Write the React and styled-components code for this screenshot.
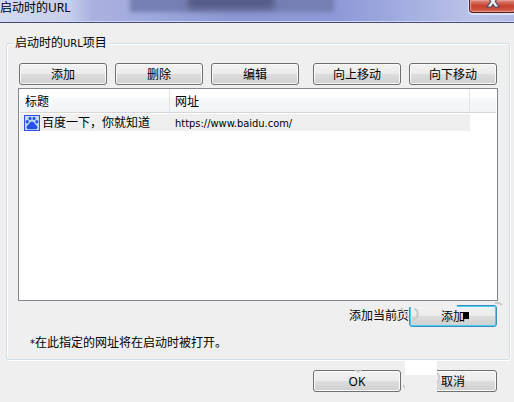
import React from "react";
import styled, { createGlobalStyle } from "styled-components";

const sites = [{ title: "百度一下，你就知道", url: "https://www.baidu.com/" }];

const App = () => {
  return (
    <React.Fragment>
      <GlobalStyle />
      <Dialog>
        <TitleBar>
          <Title>启动时的URL</Title>
          <CloseButton type="button" aria-label="关闭">
            <CloseIcon />
          </CloseButton>
        </TitleBar>

        <Group>
          <Legend>
            启动时的<Latin>URL</Latin>项目
          </Legend>
          <Toolbar>
            <ButtonSet>
              <Button type="button">添加</Button>
              <Button type="button">删除</Button>
              <Button type="button">编辑</Button>
            </ButtonSet>
            <ButtonSet>
              <Button type="button">向上移动</Button>
              <Button type="button">向下移动</Button>
            </ButtonSet>
          </Toolbar>

          <ListBox>
            <Table>
              <colgroup>
                <Col $width="150px" />
                <Col />
                <Col $width="26px" />
              </colgroup>
              <thead>
                <tr>
                  <Head>标题</Head>
                  <Head>网址</Head>
                  <Head as="td" />
                </tr>
              </thead>
              <tbody>
                {sites.map((site) => (
                  <tr key={site.url}>
                    <Cell>
                      <SiteTitle>
                        <PawIcon />
                        {site.title}
                      </SiteTitle>
                    </Cell>
                    <Cell $indent>
                      <Latin>{site.url}</Latin>
                    </Cell>
                  </tr>
                ))}
              </tbody>
            </Table>
          </ListBox>

          <CurrentPage>
            <label htmlFor="add-current">添加当前页</label>
            <ButtonHolder>
              <Button type="button" id="add-current" $focused>
                添加
              </Button>
              <FocusGap />
              <Block />
              <Smudge />
            </ButtonHolder>
          </CurrentPage>
          <Note>
            <Latin>*</Latin>在此指定的网址将在启动时被打开。
          </Note>
        </Group>

        <Footer>
          <ButtonHolder>
            <Button type="button">OK</Button>
            <OkMarks />
          </ButtonHolder>
          <ButtonHolder>
            <Button type="button">取消</Button>
            <Patch />
            <CancelMarks />
          </ButtonHolder>
        </Footer>
      </Dialog>
    </React.Fragment>
  );
};

const CloseIcon = () => (
  <svg width="14" height="14" viewBox="0 0 14 14" aria-hidden="true">
    <path
      d="M1.500 1.500h3.800L7 4l1.700-2.500h3.800L9.300 6.500l3.700 5.500H8.800L7 9.300 5.200 12H1l3.700-5.500z"
      fill="#f4f4f6"
      stroke="#4d4f66"
      strokeWidth="1.2"
    />
  </svg>
);

const PawIcon = () => (
  <svg width="16" height="16" viewBox="0 0 16 16" aria-hidden="true">
    <rect width="16" height="16" fill="#2e50e2" />
    <rect x="1" y="1" width="14" height="14" fill="#c3dcfa" />
    <g fill="#2750e6">
      <ellipse cx="3.200" cy="6.800" rx="1.600" ry="1.800" />
      <ellipse cx="6" cy="3.500" rx="1.500" ry="1.800" />
      <ellipse cx="10" cy="3.500" rx="1.500" ry="1.800" />
      <ellipse cx="12.800" cy="6.800" rx="1.600" ry="1.800" />
      <path d="M8 6.600c1.700 0 2.300 1.700 3.500 2.800 1.500 1.200 2.200 2.200 1.900 3.500-.4 1.500-2.600 1.400-5.400 1.300-2.800.1-5 .2-5.400-1.300-.3-1.300.4-2.300 1.900-3.500C5.700 8.300 6.300 6.600 8 6.600z" />
    </g>
  </svg>
);

const Smudge = () => (
  <Overlay width="112" height="32" viewBox="0 0 112 32" aria-hidden="true">
    <g fill="none" stroke="#c9c9c9" strokeWidth="2">
      <path d="M1 15l2 5M6 8l8 10" />
      <path d="M19 9c5 0 5 10-1 10" />
      <path d="M100 3h4l3 2" />
    </g>
  </Overlay>
);

const OkMarks = () => (
  <Overlay width="112" height="32" viewBox="0 0 112 32" aria-hidden="true">
    <path
      d="M56 5c3 2 4 2 6 0M104 20l4 5"
      fill="none"
      stroke="#cdcdcd"
      strokeWidth="2"
    />
  </Overlay>
);

const CancelMarks = () => (
  <Overlay width="112" height="32" viewBox="0 0 112 32" aria-hidden="true">
    <path
      d="M42 8c3 2 3 7 0 10"
      fill="none"
      stroke="#cdcdcd"
      strokeWidth="2"
    />
  </Overlay>
);

const GlobalStyle = createGlobalStyle`
  * {
    box-sizing: border-box;
  }

  body {
    margin: 0;
    background: #efefef;
    color: #000;
    font-family: "Noto Sans", "Noto Sans CJK SC", sans-serif;
    font-size: 12px;
    line-height: 16px;
  }
`;

const Dialog = styled.main`
  background: #efefef;
`;

const Latin = styled.span`
  font-family: "DejaVu Sans Condensed", "Liberation Sans", sans-serif;
  font-size: 11px;
  line-height: 12px;
`;

const TitleBar = styled.header`
  position: relative;
  isolation: isolate;
  display: flex;
  justify-content: space-between;
  align-items: flex-start;
  height: 23px;
  overflow: hidden;
  border-bottom: 1px solid #464b73;
  box-shadow: inset 0 -1px 0 #cfd5f2;
  background: linear-gradient(
    90deg,
    #d3daf0 0,
    #c5cdea 70px,
    #a9b2df 92px,
    #a0a9dd 150px,
    #8c96d2 230px,
    #8f99d8 340px,
    #a5afe0 410px,
    #b9c2e8 470px,
    #b3bce4 100%
  );

  /* the window behind, seen through the glass */
  &::before,
  &::after {
    content: "";
    position: absolute;
    z-index: -1;
    top: -6px;
    left: 130px;
    width: 204px;
    height: 18px;
    background: #767fb2;
    filter: blur(2px);
  }

  &::after {
    left: 188px;
    width: 86px;
    height: 15px;
    background: #555c88;
    filter: blur(3px);
  }
`;

const Title = styled.h1`
  margin: 0;
  font-size: 12px;
  font-weight: 400;
  line-height: 16px;
`;

const CloseButton = styled.button`
  display: flex;
  justify-content: center;
  align-items: flex-end;
  width: 47px;
  height: 13px;
  margin-right: -2px;
  padding: 0 0 3px;
  border: 1px solid #571a1c;
  border-top: 0;
  border-radius: 0 0 4px 4px;
  background: linear-gradient(#dc8b80, #c63e2c 50%, #d8614e);
  box-shadow: 0 1px 0 1px #dde2f5, inset 0 0 1px 1px #e99f94;

  svg {
    flex: none;
  }
`;

const Group = styled.fieldset`
  min-width: 0;
  margin: 12px 4px 0 6px;
  padding: 12px 11px 8px;
  border: 1px solid #d3dde6;
  border-radius: 3px;
  box-shadow: inset 1px 1px 0 #fff, 1px 1px 0 #fff;
`;

const Legend = styled.legend`
  margin-left: -5px;
  padding: 0 2px;
  background: #efefef;
`;

const Toolbar = styled.div`
  display: flex;
  justify-content: space-between;
  padding: 0 1px;
`;

const ButtonSet = styled.div`
  display: flex;
  gap: 8px;
`;

const Button = styled.button`
  width: 88px;
  height: 22px;
  padding: 2px 0 0;
  border: 1px solid ${(props) => (props.$focused ? "#3c8fbd" : "#707070")};
  border-radius: 3px;
  background: linear-gradient(#f2f2f2 0, #ebebeb 48%, #dddddd 52%, #cfcfcf 100%);
  box-shadow: inset 0 0 0 1px ${(props) => (props.$focused ? "#46d0f5" : "#fafafa")};
  color: #000;
  font: inherit;
`;

const ListBox = styled.div`
  height: 213px;
  margin-top: 3px;
  padding: 0 1px;
  border: 1px solid #828790;
  background: #fff;
`;

const Table = styled.table`
  width: 100%;
  table-layout: fixed;
  border-collapse: separate;
  border-spacing: 0;
`;

const Col = styled.col`
  width: ${(props) => props.$width || "auto"};
`;

const Head = styled.th`
  height: 24px;
  padding: 3px 5px 0;
  border-right: 1px solid #e1e4e7;
  border-bottom: 1px solid #d5d5d5;
  background: linear-gradient(#fff 0 40%, #f7f8fa 41%, #f2f3f5 100%);
  font-weight: 400;
  text-align: left;

  &:last-child {
    border-right: 0;
  }
`;

const Cell = styled.td`
  height: 18px;
  padding: 0 ${(props) => (props.$indent ? "5px" : "4px")};
  background: #efefef;
  background-clip: padding-box;
  border-top: 1px solid #fff;
  white-space: nowrap;
`;

const SiteTitle = styled.span`
  display: flex;
  align-items: center;
  gap: 2px;
`;

const CurrentPage = styled.div`
  display: flex;
  justify-content: flex-end;
  align-items: center;
  margin-top: 4px;
  padding-right: 1px;
`;

const ButtonHolder = styled.div`
  position: relative;
  display: flex;
`;

const Overlay = styled.svg`
  position: absolute;
  top: -5px;
  left: -14px;
  pointer-events: none;
`;

const FocusGap = styled.span`
  position: absolute;
  top: 0;
  left: 0;
  width: 48px;
  height: 2px;
  background: #efefef;
`;

const Block = styled.span`
  position: absolute;
  top: 7px;
  left: 54px;
  width: 6px;
  height: 7px;
  background: #000;
`;

const Patch = styled.span`
  position: absolute;
  top: -9px;
  left: -4px;
  width: 32px;
  height: 31px;
  background: linear-gradient(#fff 0 14px, #efefef 14px);
`;

const Note = styled.p`
  margin: 8px 0 0;
  padding: 0 12px;
`;

const Footer = styled.footer`
  display: flex;
  justify-content: flex-end;
  gap: 8px;
  padding: 10px 17px 10px;
`;

export default App;
